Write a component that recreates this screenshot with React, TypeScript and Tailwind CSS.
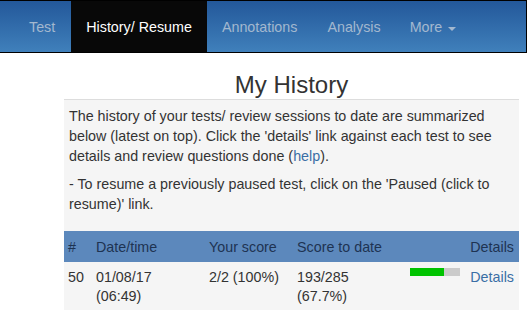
import React from "react";

const navItems = ["Test", "History/ Resume", "Annotations", "Analysis"];

const App: React.FC = () => {
  return (
    <div className="w-[527px] h-[312px] overflow-hidden bg-white text-[#333] font-['Liberation_Sans',Arial,sans-serif]">
      {/* Navbar */}
      <nav className="h-[53px] flex items-stretch pl-[14px] border-t border-b border-r border-black bg-gradient-to-b from-[#23589a] to-[#4080bb] text-[14.3px]">
        {navItems.map((item) => (
          <a
            key={item}
            className={`flex items-center pt-[3px] px-[15px] ${
              item === "History/ Resume" ? "ml-[1px] bg-[#080808] text-white" : "text-[#a3b8cf]"
            }`}
          >
            {item}
          </a>
        ))}
        <a className="flex items-center pt-[3px] px-[14px] text-[#a3b8cf]">
          More
          <span className="ml-[6px] mt-[2px] w-0 h-0 border-l-[4px] border-r-[4px] border-t-[4px] border-l-transparent border-r-transparent border-t-[#a3b8cf]" />
        </a>
      </nav>

      {/* Content */}
      <div className="ml-[64px] w-[455px]">
        <h1 className="pt-[19px] pb-[1px] text-center text-[24px] leading-[26px] text-[#333]">My History</h1>

        <div className="border-t border-[#dddddd] bg-[#f5f5f5] text-[14.3px] leading-[20px]">
          <div className="px-[5px] pt-[6px]">
            <p className="mb-[8px]">
              The history of your tests/ review sessions to date are summarized below (latest on top). Click the
              'details' link against each test to see details and review questions done (<a className="text-[#3a6ea5]">help</a>).
            </p>
            <p>- To resume a previously paused test, click on the 'Paused (click to resume)' link.</p>
          </div>

          {/* Table */}
          <div className="mt-[17px]">
            <div className="grid grid-cols-[28px_113px_88px_112px_60px_1fr] h-[31px] items-center bg-[#5c88bc] text-[#1e3352]">
              <div className="pl-[4px]">#</div>
              <div className="pl-[4px]">Date/time</div>
              <div className="pl-[4px]">Your score</div>
              <div className="pl-[4px]">Score to date</div>
              <div />
              <div className="text-right pr-[5px]">Details</div>
            </div>
            <div className="grid grid-cols-[28px_113px_88px_112px_60px_1fr] pt-[6px] pb-[4px] leading-[19px]">
              <div className="pl-[4px]">50</div>
              <div className="pl-[4px]">
                01/08/17
                <br />
                (06:49)
              </div>
              <div className="pl-[4px]">2/2 (100%)</div>
              <div className="pl-[4px]">
                193/285
                <br />
                (67.7%)
              </div>
              <div className="pl-[5px]">
                <div className="flex w-[50px] h-[8px]">
                  <div className="w-[34px] bg-[#00c300]" />
                  <div className="flex-1 bg-[#cbcbcb]" />
                </div>
              </div>
              <div className="text-right pr-[5px]">
                <a className="text-[#3a6ea5]">Details</a>
              </div>
            </div>
          </div>
        </div>
      </div>
    </div>
  );
};

export default App;
